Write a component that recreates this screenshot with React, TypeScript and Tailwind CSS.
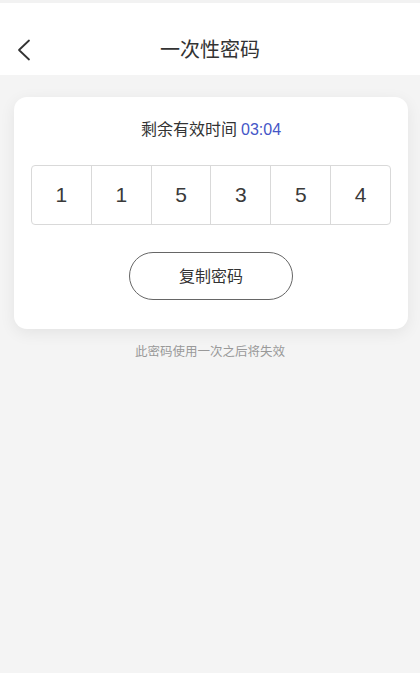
import React from "react";

const font = { fontFamily: '"Noto Sans", "Noto Sans CJK SC", sans-serif' };
const numFont = { fontFamily: '"Liberation Sans", Arial, sans-serif' };

export default function App() {
  const digits = ["1", "1", "5", "3", "5", "4"];
  return (
    <div className="w-[420px] h-[673px] bg-[#f4f4f4] flex flex-col" style={font}>
      <div className="h-[3px] bg-[#f2f2f2]" />
      <div className="h-[72px] bg-white flex flex-col">
        <div className="h-[22px]" />
        <div className="h-[50px] relative flex items-center justify-center">
          <div className="absolute left-[16px] top-[13px]">
            <svg width="16" height="24" viewBox="0 0 16 24" fill="none">
              <path d="M13 2.5 L3 12 L13 21.5" stroke="#333" strokeWidth="1.8" strokeLinecap="round" strokeLinejoin="round" />
            </svg>
          </div>
          <span className="text-[20px] text-[#333] leading-none">一次性密码</span>
        </div>
      </div>
      <div className="ml-[14px] mr-[12px] mt-[22px] bg-white rounded-[13px] shadow-[0_4px_16px_rgba(0,0,0,0.07)] flex flex-col items-center pt-[20px] pb-[29px]">
        <div className="text-[16px] leading-[24px] text-[#333]">
          剩余有效时间 <span className="text-[#4456c7]" style={numFont}>03:04</span>
        </div>
        <div className="mt-[23px] flex w-[360px] h-[60px] border border-[#d9d9d9] rounded-[4px]">
          {digits.map((d, i) => (
            <div
              key={i}
              style={numFont}
              className={`flex-1 flex items-center justify-center text-[21px] text-[#3a3a3a] ${i > 0 ? "border-l border-[#d9d9d9]" : ""}`}
            >
              {d}
            </div>
          ))}
        </div>
        <button className="mt-[27px] w-[164px] h-[48px] rounded-full border border-[#666] text-[16px] text-[#333] bg-white">
          复制密码
        </button>
      </div>
      <div className="mt-[14px] text-center text-[12.5px] text-[#999]">此密码使用一次之后将失效</div>
    </div>
  );
}
